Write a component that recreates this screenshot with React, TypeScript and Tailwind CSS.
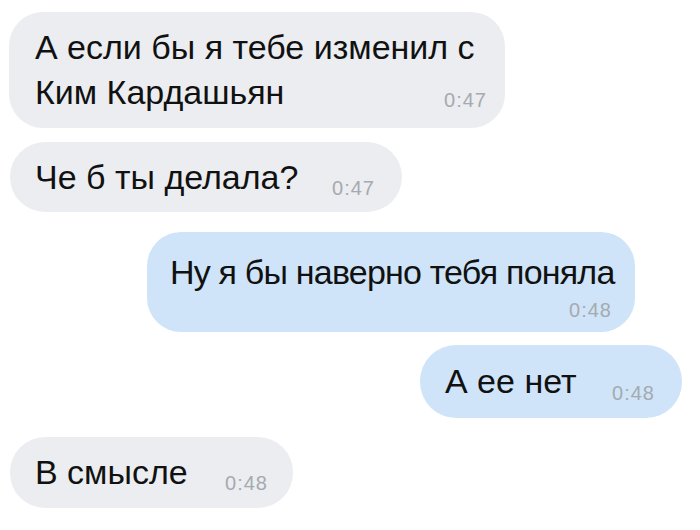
const font = { fontFamily: '"Liberation Sans", Arial, sans-serif' };

function Time({ t, className = '' }: { t: string; className?: string }) {
  return (
    <span className={`block text-[20px] leading-[19px] tracking-[1px] text-[#a5aab0] ${className}`}>
      {t}
    </span>
  );
}

export default function App() {
  return (
    <div className="w-[700px] h-[530px] bg-white overflow-hidden flex flex-col whitespace-nowrap text-[#111]" style={font}>
      {/* 1 */}
      <div className="self-start ml-[9px] mt-[12px] w-[496px] rounded-[34px] bg-[#ebedf0] pl-[26px] pr-[18px] pt-[13px] pb-[13px] text-[34px] leading-[45px]">
        <div>А если бы я тебе изменил с</div>
        <div className="flex items-end justify-between">
          <span>Ким Кардашьян</span>
          <Time t="0:47" className="mb-[5px]" />
        </div>
      </div>

      {/* 2 */}
      <div className="self-start ml-[10px] mt-[14px] w-[392px] h-[70px] rounded-[35px] bg-[#ebedf0] pl-[25px] pr-[27px] flex items-center justify-between text-[34px]">
        <span>Че б ты делала?</span>
        <Time t="0:47" className="self-end mb-[14px]" />
      </div>

      {/* 3 */}
      <div className="self-end mr-[65px] mt-[20px] w-[488px] rounded-[34px] bg-[#cfe4f8] pl-[23px] pr-[23px] pt-[18px] pb-[12px] text-[34px] leading-[45px]">
        <div className="tracking-[-0.8px]">Ну я бы наверно тебя поняла</div>
        <Time t="0:48" className="mt-[6px] text-right" />
      </div>

      {/* 4 */}
      <div className="self-end mr-[18px] mt-[13px] w-[262px] h-[73px] rounded-[36px] bg-[#cfe4f8] pl-[25px] pr-[27px] flex items-center justify-between text-[34px]">
        <span>А ее нет</span>
        <Time t="0:48" className="self-end mb-[15px]" />
      </div>

      {/* 5 */}
      <div className="self-start ml-[10px] mt-[19px] w-[283px] h-[71px] rounded-[35px] bg-[#ebedf0] pl-[25px] pr-[25px] flex items-center justify-between text-[34px]">
        <span>В смысле</span>
        <Time t="0:48" className="self-end mb-[15px]" />
      </div>
    </div>
  );
}
